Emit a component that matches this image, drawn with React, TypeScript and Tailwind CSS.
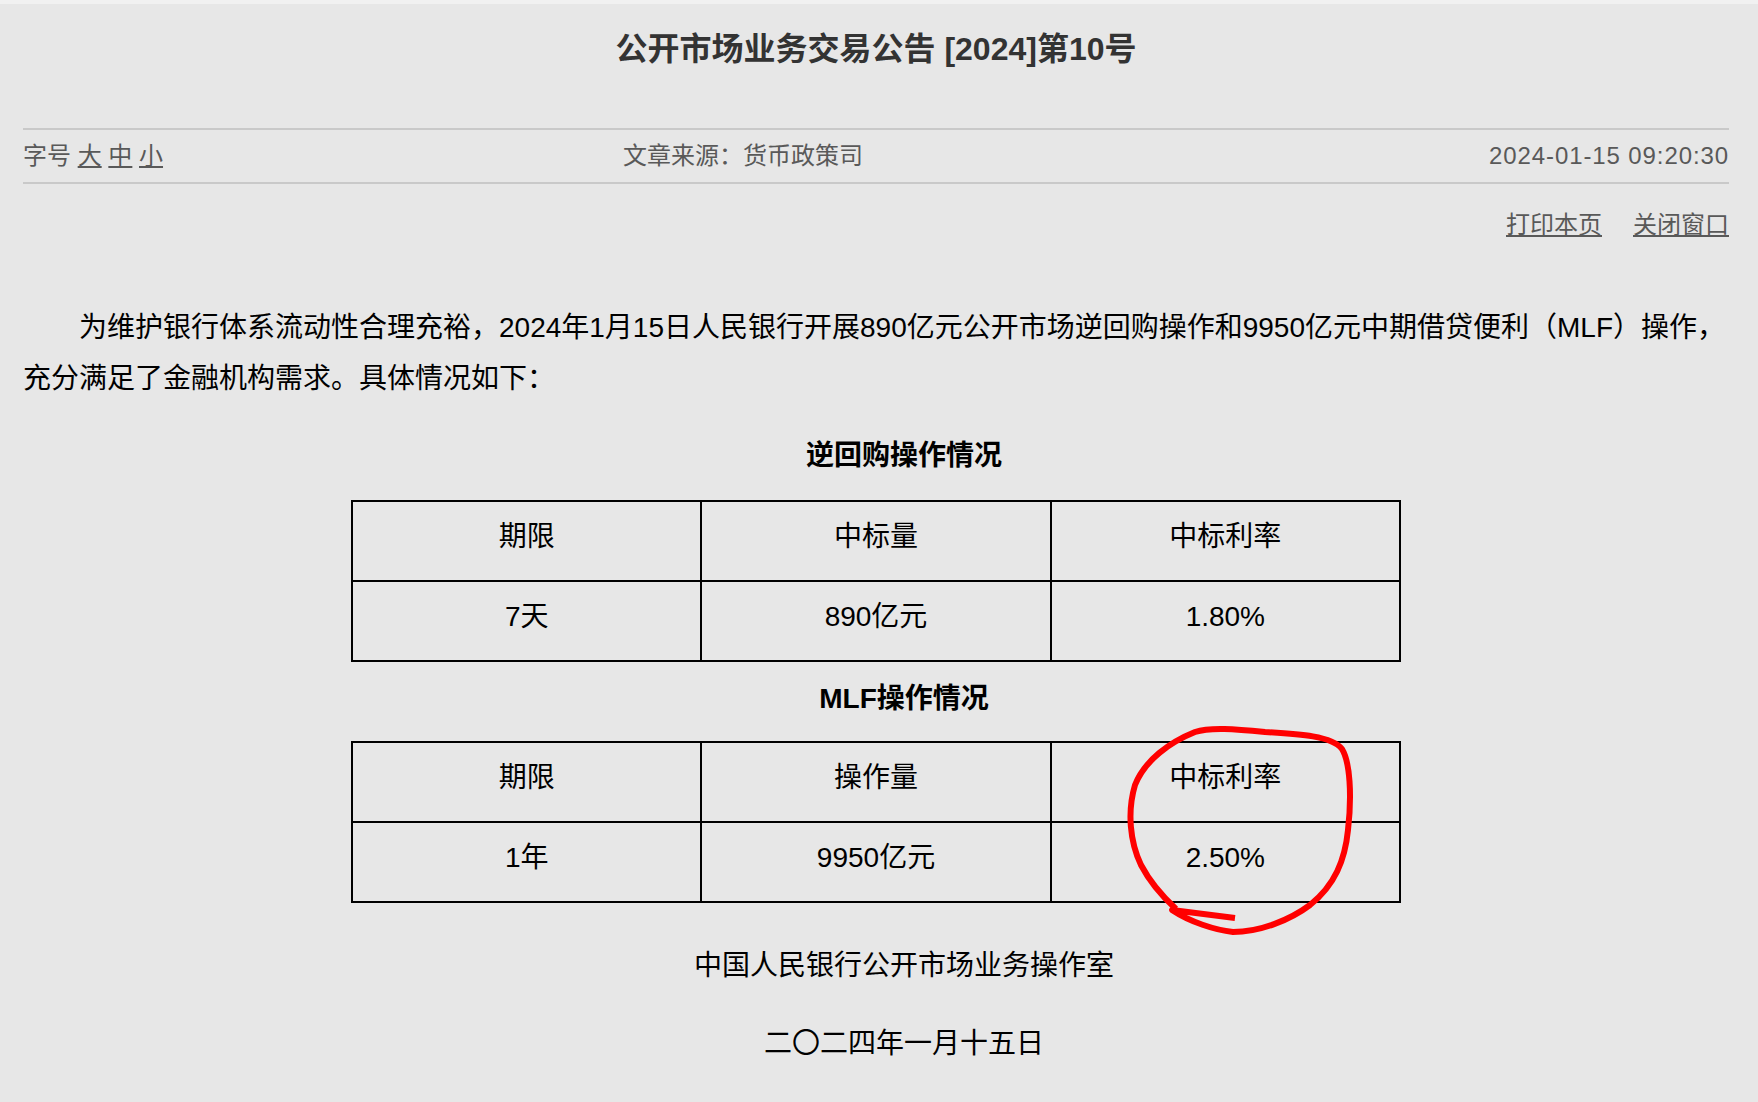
const font = { fontFamily: '"Liberation Sans", "Noto Sans CJK SC", sans-serif' };

type Table = {
  title: string;
  head: string[];
  row: string[];
};

const tables: Table[] = [
  { title: "逆回购操作情况", head: ["期限", "中标量", "中标利率"], row: ["7天", "890亿元", "1.80%"] },
  { title: "MLF操作情况", head: ["期限", "操作量", "中标利率"], row: ["1年", "9950亿元", "2.50%"] },
];

function DataTable({ t }: { t: Table }) {
  return (
    <table className="mx-auto w-[1050px] table-fixed border-collapse border-2 border-black text-[28px] text-black">
      <tbody>
        {[t.head, t.row].map((cells, i) => (
          <tr key={i}>
            {cells.map((c) => (
              <td key={c} className="h-[80px] border-2 border-black pb-[9px] text-center align-middle leading-[36px]">
                {c}
              </td>
            ))}
          </tr>
        ))}
      </tbody>
    </table>
  );
}

export default function App() {
  return (
    <div className="relative min-h-screen w-full bg-[#e7e7e7]" style={font}>
      <div className="h-[4px] bg-[#f1f1f1]" />

      <div className="pl-[23px] pr-[29px]">
        <h1 className="mt-[25px] text-center text-[32px] font-bold leading-[40px] text-[#333]">
          公开市场业务交易公告 [2024]第10号
        </h1>

        <div className="mt-[59px] flex h-[56px] items-center border-y-2 border-[#c9c9c9] text-[24px] text-[#595959]">
          <div className="w-[600px]">
            字号 <a className="underline">大</a> <a className="underline">中</a> <a className="underline">小</a>
          </div>
          <div className="flex-1">文章来源：货币政策司</div>
          <div className="tracking-[0.9px]">2024-01-15 09:20:30</div>
        </div>

        <div className="mt-[23px] flex justify-end gap-[31px] text-[24px] leading-[36px] text-[#595959]">
          <a className="underline">打印本页</a>
          <a className="underline">关闭窗口</a>
        </div>

        <p className="mt-[59px] indent-[56px] text-[28px] leading-[51px] text-black">
          为维护银行体系流动性合理充裕，2024年1月15日人民银行开展890亿元公开市场逆回购操作和9950亿元中期借贷便利（MLF）操作，充分满足了金融机构需求。具体情况如下：
        </p>

        <h2 className="mt-[32px] indent-[56px] text-center text-[28px] font-bold leading-[40px] text-black">
          {tables[0].title}
        </h2>
        <div className="mt-[24px]">
          <DataTable t={tables[0]} />
        </div>

        <h2 className="mt-[17px] indent-[56px] text-center text-[28px] font-bold leading-[40px] text-black">
          {tables[1].title}
        </h2>
        <div className="mt-[22px]">
          <DataTable t={tables[1]} />
        </div>

        <p className="mt-[43px] indent-[56px] text-center text-[28px] leading-[40px] text-black">
          中国人民银行公开市场业务操作室
        </p>
        <p className="mt-[38px] pb-[40px] indent-[56px] text-center text-[28px] leading-[40px] text-black">
          二〇二四年一月十五日
        </p>
      </div>

      {/* hand-drawn red mark over the MLF rate */}
      <svg
        className="pointer-events-none absolute left-0 top-0"
        width={1758}
        height={1102}
        viewBox="0 0 1758 1102"
        fill="none"
      >
        <path
          d="M1235,918 L1172,910 C1190,922 1215,930 1233,932 C1260,932 1290,920 1310,905 C1335,885 1345,860 1348,830 C1352,795 1350,762 1342,749 C1332,736 1300,734 1265,732 C1235,729 1210,727 1195,732 C1170,742 1145,760 1135,785 C1127,812 1130,842 1141,865 C1151,884 1163,897 1176,909"
          stroke="#ff0000"
          strokeWidth={6}
          strokeLinejoin="round"
        />
      </svg>
    </div>
  );
}
